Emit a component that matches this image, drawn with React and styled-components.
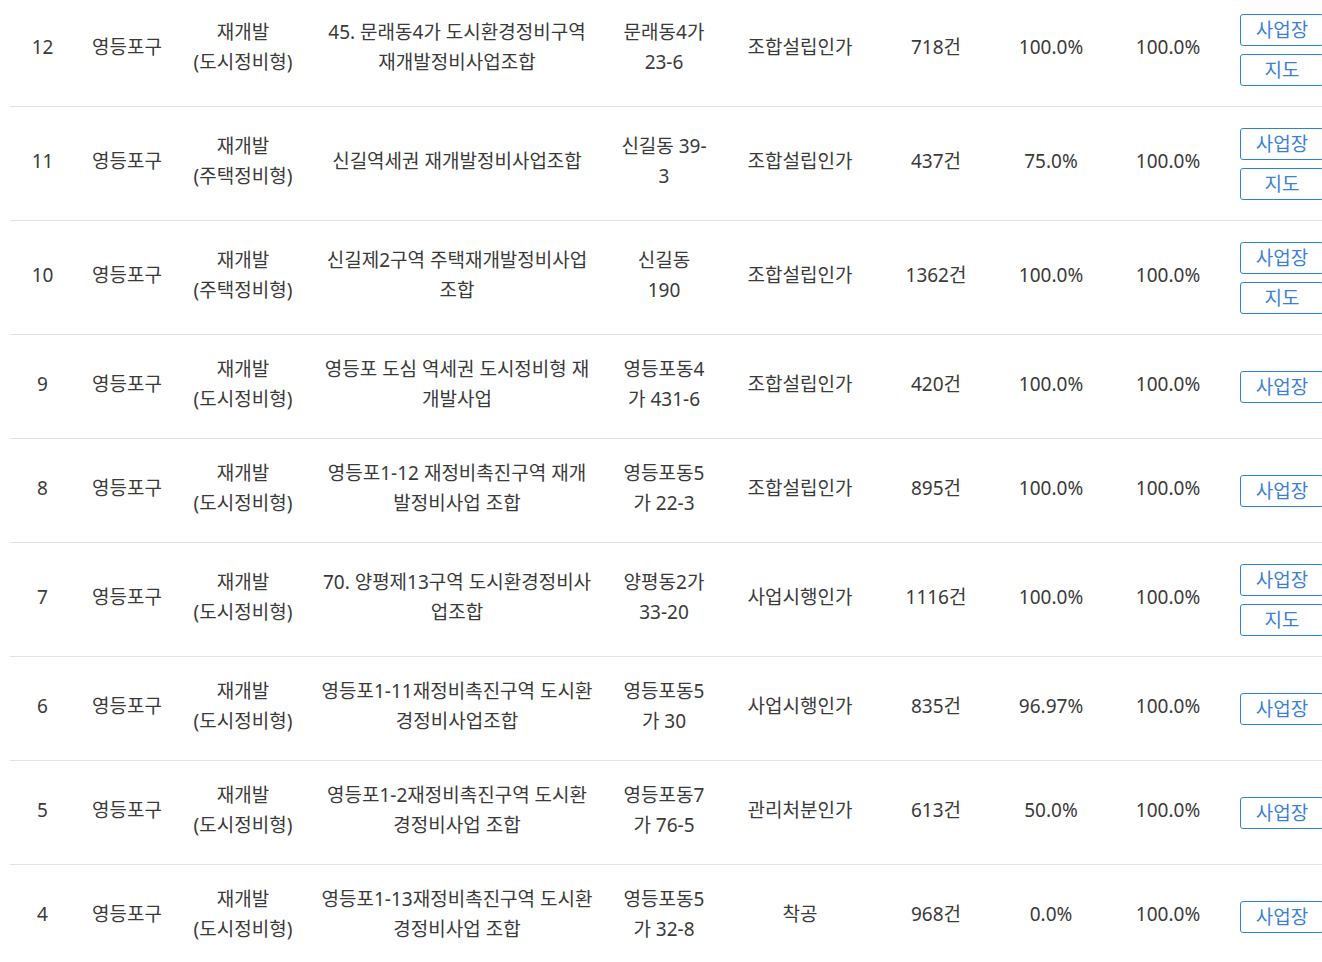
import React from "react";
import styled, { createGlobalStyle } from "styled-components";

const rows = [
  { no: 12, gu: "영등포구", type: "재개발\n(도시정비형)", name: "45. 문래동4가 도시환경정비구역 재개발정비사업조합", addr: "문래동4가 23-6", step: "조합설립인가", count: "718건", rate1: "100.0%", rate2: "100.0%", map: true },
  { no: 11, gu: "영등포구", type: "재개발\n(주택정비형)", name: "신길역세권 재개발정비사업조합", addr: "신길동 39-3", step: "조합설립인가", count: "437건", rate1: "75.0%", rate2: "100.0%", map: true },
  { no: 10, gu: "영등포구", type: "재개발\n(주택정비형)", name: "신길제2구역 주택재개발정비사업 조합", addr: "신길동 190", step: "조합설립인가", count: "1362건", rate1: "100.0%", rate2: "100.0%", map: true },
  { no: 9, gu: "영등포구", type: "재개발\n(도시정비형)", name: "영등포 도심 역세권 도시정비형 재개발사업", addr: "영등포동4가 431-6", step: "조합설립인가", count: "420건", rate1: "100.0%", rate2: "100.0%", map: false },
  { no: 8, gu: "영등포구", type: "재개발\n(도시정비형)", name: "영등포1-12 재정비촉진구역 재개발정비사업 조합", addr: "영등포동5가 22-3", step: "조합설립인가", count: "895건", rate1: "100.0%", rate2: "100.0%", map: false },
  { no: 7, gu: "영등포구", type: "재개발\n(도시정비형)", name: "70. 양평제13구역 도시환경정비사업조합", addr: "양평동2가 33-20", step: "사업시행인가", count: "1116건", rate1: "100.0%", rate2: "100.0%", map: true },
  { no: 6, gu: "영등포구", type: "재개발\n(도시정비형)", name: "영등포1-11재정비촉진구역 도시환경정비사업조합", addr: "영등포동5가 30", step: "사업시행인가", count: "835건", rate1: "96.97%", rate2: "100.0%", map: false },
  { no: 5, gu: "영등포구", type: "재개발\n(도시정비형)", name: "영등포1-2재정비촉진구역 도시환경정비사업 조합", addr: "영등포동7가 76-5", step: "관리처분인가", count: "613건", rate1: "50.0%", rate2: "100.0%", map: false },
  { no: 4, gu: "영등포구", type: "재개발\n(도시정비형)", name: "영등포1-13재정비촉진구역 도시환경정비사업 조합", addr: "영등포동5가 32-8", step: "착공", count: "968건", rate1: "0.0%", rate2: "100.0%", map: false },
];

const widths = [65, 104, 128, 300, 114, 158, 114, 116, 118, 110];

function App() {
  return (
    <>
      <GlobalStyle />
      <Page>
        <Table>
          <colgroup>
            {widths.map((w, i) => (
              <col key={i} style={{ width: w }} />
            ))}
          </colgroup>
          <tbody>
            {rows.map(row => (
              <Row key={row.no}>
                <Cell>{row.no}</Cell>
                <Cell>{row.gu}</Cell>
                <Cell $pre>{row.type}</Cell>
                <Cell $pad="14px">{row.name}</Cell>
                <Cell $pad="13px">{row.addr}</Cell>
                <Cell>{row.step}</Cell>
                <Cell>{row.count}</Cell>
                <Cell>{row.rate1}</Cell>
                <Cell>{row.rate2}</Cell>
                <ActionCell>
                  <Buttons>
                    <LinkButton>사업장</LinkButton>
                    {row.map && <LinkButton>지도</LinkButton>}
                  </Buttons>
                </ActionCell>
              </Row>
            ))}
          </tbody>
        </Table>
      </Page>
    </>
  );
}

export default App;

const GlobalStyle = createGlobalStyle`
  html, body {
    margin: 0;
    padding: 0;
    background: #fff;
    overflow: hidden;
  }
  body {
    font-family: "Noto Sans", "Noto Sans CJK KR", sans-serif;
    color: #3a3a3a;
  }
`;

const Page = styled.div`
  padding-left: 10px;
  margin-top: -7px;
  width: 1340px;
`;

const Table = styled.table`
  border-collapse: collapse;
  table-layout: fixed;
  width: 1327px;
`;

const Row = styled.tr`
  border-bottom: 1px solid #e3e3e3;
`;

const Cell = styled.td`
  padding: 19px ${p => p.$pad || "4px"} 24px;
  text-align: center;
  vertical-align: middle;
  font-size: 19px;
  line-height: 30px;
  font-weight: 400;
  color: #3a3a3a;
  white-space: ${p => (p.$pre ? "pre-line" : "normal")};
`;

const ActionCell = styled.td`
  padding: 21px 0 20px;
  vertical-align: middle;
`;

const Buttons = styled.div`
  display: flex;
  flex-direction: column;
  align-items: center;
  gap: 8px;
`;

const LinkButton = styled.button`
  width: 84px;
  height: 32px;
  padding: 0;
  border: 1px solid #2f7fdc;
  border-radius: 3px;
  background: #fff;
  color: #3a7fd8;
  font-family: "Noto Sans", "Noto Sans CJK KR", sans-serif;
  font-size: 19px;
  line-height: 30px;
  cursor: pointer;
`;
